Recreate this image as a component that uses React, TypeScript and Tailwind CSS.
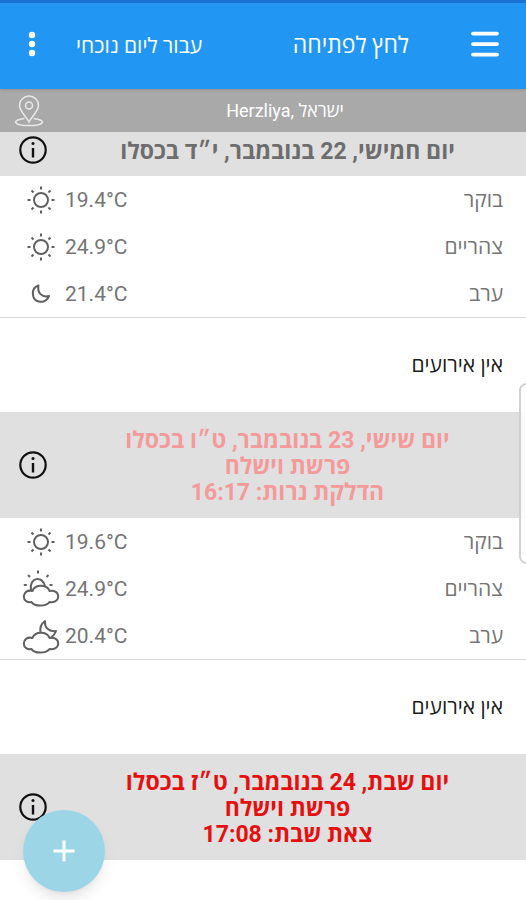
import { Menu } from 'lucide-react'
import type { ReactNode } from 'react'

type Weather = 'sun' | 'moon' | 'cloud-sun' | 'cloud-moon'

interface Reading {
  part: string
  temp: string
  weather: Weather
}

interface Day {
  lines: string[]
  color: string
  padding: string
  readings: Reading[]
}

const days: Day[] = [
  {
    lines: ['יום חמישי, 22 בנובמבר, י״ד בכסלו'],
    color: 'text-[#6d6d6d]',
    padding: 'pt-1 pb-3',
    readings: [
      { part: 'בוקר', temp: '19.4°C', weather: 'sun' },
      { part: 'צהריים', temp: '24.9°C', weather: 'sun' },
      { part: 'ערב', temp: '21.4°C', weather: 'moon' },
    ],
  },
  {
    lines: ['יום שישי, 23 בנובמבר, ט״ו בכסלו', 'פרשת וישלח', 'הדלקת נרות: 16:17'],
    color: 'text-[#f49a9a]',
    padding: 'py-3.5',
    readings: [
      { part: 'בוקר', temp: '19.6°C', weather: 'sun' },
      { part: 'צהריים', temp: '24.9°C', weather: 'cloud-sun' },
      { part: 'ערב', temp: '20.4°C', weather: 'cloud-moon' },
    ],
  },
  {
    lines: ['יום שבת, 24 בנובמבר, ט״ז בכסלו', 'פרשת וישלח', 'צאת שבת: 17:08'],
    color: 'text-[#e60f0f]',
    padding: 'py-3.5',
    readings: [],
  },
]

const cloudPath =
  'M9.500 19 C4 17.500 .8 21 .8 24.500 C.8 28.500 4.500 30.800 8.500 30 C11 34.800 23.500 34.800 26.500 30 C31 30.800 35.200 28.500 35.200 24.500 C35.200 20.500 31.500 18 26.500 19 C24 12 12 12 9.500 19 Z'

const weatherIcons: Record<Weather, ReactNode> = {
  sun: (
    <>
      <circle cx="18" cy="17" r="7" />
      <path d="M18 3.500v3M18 27.500v3M4.500 17h3M28.500 17h3M8.500 7.500l2 2M25.500 24.500l2 2M8.500 26.500l2-2M25.500 9.500l2-2" />
    </>
  ),
  moon: <path d="M15.500 8.500 C7.500 11 8 23.500 17 24.800 C21.500 25.300 24.500 22.500 26 19 C19 21 14 15.500 15.500 8.500 Z" />,
  'cloud-sun': (
    <>
      <path d={cloudPath} />
      <path d="M8 18.500 C5.500 5 20 3 22 14.500" />
      <path d="M15 -1.500v3M5 3l2 2M25.500 3l-2 2M.8 13h3M26.500 13h3" />
    </>
  ),
  'cloud-moon': (
    <>
      <path d={cloudPath} />
      <path d="M17.500 14 C16.500 8.500 18.500 4.500 22 2 C21.500 8.500 25.500 13 33 12 C32 15 30.500 17 28 18.500" />
    </>
  ),
}

function WeatherIcon({ weather }: { weather: Weather }) {
  return (
    <svg
      className="h-9 w-9 overflow-visible"
      viewBox="0 0 36 36"
      fill="none"
      stroke="#606060"
      strokeWidth="2"
      strokeLinejoin="round"
      aria-hidden="true"
    >
      {weatherIcons[weather]}
    </svg>
  )
}

function InfoButton() {
  return (
    <button type="button" aria-label="מידע" className="shrink-0">
      <svg className="h-7 w-7" viewBox="0 0 28 28" fill="none" stroke="#111" aria-hidden="true">
        <circle cx="14" cy="14" r="12.700" strokeWidth="2.200" />
        <path d="M14 12v9.500" strokeWidth="2.400" />
        <circle cx="14" cy="7.500" r="1.500" fill="#111" stroke="none" />
      </svg>
    </button>
  )
}

function AppBar() {
  return (
    <header className="relative z-10 flex h-[89px] items-center border-t-3 border-[#1b73d8] bg-[#2196f3] px-6 pb-1 text-white shadow">
      <button type="button" aria-label="תפריט" className="-ms-px me-[58px]">
        <Menu className="h-9 w-9" strokeWidth={2.5} aria-hidden="true" />
      </button>
      <h1 className="pt-1 text-[23px] leading-7">לחץ לפתיחה</h1>
      <button type="button" className="ms-auto me-9 pt-1 text-[21px] leading-7">
        עבור ליום נוכחי
      </button>
      <button type="button" aria-label="אפשרויות נוספות">
        <svg className="h-7 w-4" viewBox="0 0 16 28" fill="currentColor" aria-hidden="true">
          <circle cx="8" cy="5" r="3.200" />
          <circle cx="8" cy="14" r="3.200" />
          <circle cx="8" cy="23" r="3.200" />
        </svg>
      </button>
    </header>
  )
}

function LocationBar() {
  return (
    <div className="flex h-[43px] items-center bg-[#a9a9a9] text-white">
      <p className="flex-1 text-center text-lg leading-6" dir="ltr">
        Herzliya, ישראל
      </p>
      <button type="button" aria-label="מיקום" className="me-3.5">
        <svg
          className="h-8 w-[30px]"
          viewBox="0 0 30 32"
          fill="none"
          stroke="#e8e8e8"
          strokeWidth="1.500"
          aria-hidden="true"
        >
          <path d="M15 27 C12 21 5.500 16 5.500 10.500 A9.500 9.500 0 0 1 24.500 10.500 C24.500 16 18 21 15 27 Z" />
          <circle cx="15" cy="10.500" r="3.500" />
          <path d="M10.500 23.500 C-3 25 -1 30.500 15 30.500 C31 30.500 33 25 19.500 23.500" />
        </svg>
      </button>
    </div>
  )
}

function DaySection({ day }: { day: Day }) {
  return (
    <section>
      <div className={`flex items-center bg-[#e0e0e0] pe-[19px] ${day.padding}`}>
        <h2 className={`flex-1 ps-0 pe-0.5 pt-0.5 text-center text-[23px] leading-[26px] font-bold ${day.color} -mb-0.5`}>
          {day.lines.map((line) => (
            <span key={line} className="block">
              {line}
            </span>
          ))}
        </h2>
        <InfoButton />
      </div>
      {day.readings.length > 0 && (
        <>
          <ul className="border-b border-[#d9d9d9] text-[#757575]">
            {day.readings.map((reading) => (
              <li key={reading.part} className="flex h-[47px] items-center justify-between px-[23px] pt-0.5">
                <span className="text-[21px]">{reading.part}</span>
                <span className="flex items-center gap-1.5 text-[21px]" dir="ltr">
                  <WeatherIcon weather={reading.weather} />
                  {reading.temp}
                </span>
              </li>
            ))}
          </ul>
          <p className="px-[23px] py-8 text-[21px] leading-[30px] text-[#1c1c1c]">אין אירועים</p>
        </>
      )}
    </section>
  )
}

export default function App() {
  return (
    <div
      dir="rtl"
      lang="he"
      className="min-h-screen overflow-x-hidden bg-white font-[Roboto,'Open_Sans','Noto_Sans',sans-serif]"
    >
      <AppBar />
      <main>
        <LocationBar />
        {days.map((day) => (
          <DaySection key={day.lines[0]} day={day} />
        ))}
      </main>

      {/* Edge panel handle */}
      <div className="fixed top-[383px] -right-2 h-[181px] w-[15px] rounded-lg border-2 border-[#d0d0d0] bg-white/85" />

      <button
        type="button"
        aria-label="הוספה"
        className="fixed bottom-2 left-[23px] flex h-[82px] w-[82px] items-center justify-center rounded-full bg-[#9bd5e6] text-white shadow-lg"
      >
        <svg className="h-6 w-6" viewBox="0 0 24 24" stroke="currentColor" strokeWidth="3" aria-hidden="true">
          <path d="M12 1.500v21M1.500 12h21" />
        </svg>
      </button>
    </div>
  )
}
